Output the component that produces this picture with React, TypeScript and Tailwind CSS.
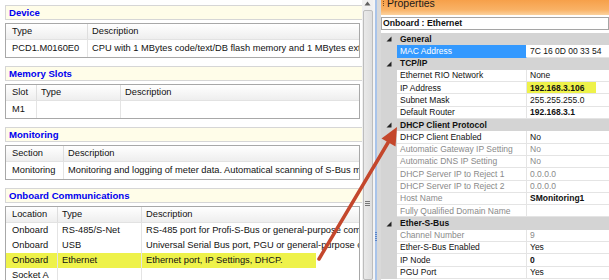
import React from "react";

type Col = { w?: string; label: string };

function Section({
  title,
  cols,
  rows,
  highlightRow,
  rowH,
}: {
  title: string;
  cols: Col[];
  rows: string[][];
  highlightRow?: number;
  rowH: string;
}) {
  return (
    <div className="flex flex-col">
      <div className="h-[15px] border border-r-0 border-[#d6d6d6] bg-[#fffde9] flex items-center pl-[3px] text-[9.6px] font-bold text-[#0000f0] leading-none">
        {title}
      </div>
      <div className="mt-[3px] w-[355px] border border-[#a8a8a8] flex flex-col text-[9.3px] text-[#111] leading-none">
        <div className="h-[16px] flex bg-[linear-gradient(#ffffff,#eeeeee)] border-b border-[#e2e2e2]">
          {cols.map((c, i) => (
            <div
              key={i}
              className={`${c.w ?? "flex-1"} flex items-center ${i === 0 ? "pl-[6px]" : "pl-[4px] border-l border-[#dedede]"} whitespace-nowrap overflow-hidden`}
            >
              {c.label}
            </div>
          ))}
        </div>
        {rows.map((r, ri) => (
          <div key={ri} className={`${rowH} flex relative`}>
            {highlightRow === ri && (
              <div className="absolute left-0 top-0 bottom-0 w-[310px] bg-[#eef24a]" />
            )}
            {cols.map((c, i) => (
              <div
                key={i}
                className={`${c.w ?? "flex-1"} relative flex items-center ${i === 0 ? "pl-[6px]" : "pl-[4px] border-l border-[#e4e4e4]"} whitespace-nowrap overflow-hidden`}
              >
                {r[i]}
              </div>
            ))}
          </div>
        ))}
      </div>
    </div>
  );
}

type P =
  | { cat: string }
  | { l: string; v?: string; sel?: boolean; dis?: boolean; bold?: boolean; hl?: boolean; ldis?: boolean };

const props: P[] = [
  { cat: "General" },
  { l: "MAC Address", v: "7C 16 0D 00 33 54", sel: true },
  { cat: "TCP/IP" },
  { l: "Ethernet RIO Network", v: "None" },
  { l: "IP Address", v: "192.168.3.106", bold: true, hl: true },
  { l: "Subnet Mask", v: "255.255.255.0" },
  { l: "Default Router", v: "192.168.3.1", bold: true },
  { cat: "DHCP Client Protocol" },
  { l: "DHCP Client Enabled", v: "No" },
  { l: "Automatic Gateway IP Setting", v: "No", dis: true },
  { l: "Automatic DNS IP Setting", v: "No", dis: true },
  { l: "DHCP Server IP to Reject 1", v: "0.0.0.0", dis: true },
  { l: "DHCP Server IP to Reject 2", v: "0.0.0.0", dis: true },
  { l: "Host Name", v: "SMonitoring1", bold: true, ldis: true },
  { l: "Fully Qualified Domain Name", v: "", dis: true },
  { cat: "Ether-S-Bus" },
  { l: "Channel Number", v: "9", dis: true },
  { l: "Ether-S-Bus Enabled", v: "Yes" },
  { l: "IP Node", v: "0", bold: true },
  { l: "PGU Port", v: "Yes" },
];

function Tri() {
  return (
    <svg width="6" height="6" viewBox="0 0 6 6" className="block">
      <polygon points="5.5,0.5 5.5,5.5 0.5,5.5" fill="#222" />
    </svg>
  );
}

export default function App() {
  return (
    <div className="w-[609px] h-[280px] overflow-hidden flex relative bg-white font-['Liberation_Sans',Arial,sans-serif]">
      {/* Left pane */}
      <div className="w-[362px] shrink-0 flex flex-col gap-2 pl-[5px] pt-[5px] overflow-hidden">
        <Section
          title="Device"
          rowH="h-[17px]"
          cols={[{ w: "w-[81px] shrink-0", label: "Type" }, { label: "Description" }]}
          rows={[["PCD1.M0160E0", "CPU with 1 MBytes code/text/DB flash memory and 1 MBytes extension"]]}
        />
        <Section
          title="Memory Slots"
          rowH="h-[17px]"
          cols={[
            { w: "w-[30px] shrink-0", label: "Slot" },
            { w: "w-[84px] shrink-0", label: "Type" },
            { label: "Description" },
          ]}
          rows={[["M1", "", ""]]}
        />
        <Section
          title="Monitoring"
          rowH="h-[17px]"
          cols={[{ w: "w-[57px] shrink-0", label: "Section" }, { label: "Description" }]}
          rows={[["Monitoring", "Monitoring and logging of meter data. Automatical scanning of S-Bus meters"]]}
        />
        <Section
          title="Onboard Communications"
          rowH="h-[15px]"
          highlightRow={2}
          cols={[
            { w: "w-[51px] shrink-0", label: "Location" },
            { w: "w-[84px] shrink-0", label: "Type" },
            { label: "Description" },
          ]}
          rows={[
            ["Onboard", "RS-485/S-Net", "RS-485 port for Profi-S-Bus or general-purpose communication"],
            ["Onboard", "USB", "Universal Serial Bus port, PGU or general-purpose communication"],
            ["Onboard", "Ethernet", "Ethernet port, IP Settings, DHCP."],
            ["Socket A", "", ""],
            ["", "", ""],
          ]}
        />
      </div>

      {/* Scrollbar */}
      <div className="w-[11px] shrink-0 bg-[#f0f0f0] flex flex-col items-center">
        <svg width="7" height="5" viewBox="0 0 7 5" className="mt-[1px]">
          <polygon points="3.5,0.5 6.5,4.5 0.5,4.5" fill="#606060" />
        </svg>
        <div className="mt-[4px] w-[10px] flex-1 border border-[#bdbdbd] rounded-[2px] bg-[linear-gradient(90deg,#e9e9e9,#dedede)] flex flex-col items-center pt-[190px] gap-[1px]">
          <div className="w-[5px] h-px bg-[#777]" />
          <div className="w-[5px] h-px bg-[#777]" />
          <div className="w-[5px] h-px bg-[#777]" />
        </div>
      </div>

      {/* Splitter */}
      <div className="w-[8px] shrink-0 flex">
        <div className="w-[2px] bg-[#f4f4f4]" />
        <div className="w-[2px] bg-[#a9c4ea] flex flex-col items-center pt-[232px] gap-[1px]">
          <div className="w-[2px] h-px bg-[#5a84c8]" />
          <div className="w-[2px] h-px bg-[#5a84c8]" />
          <div className="w-[2px] h-px bg-[#5a84c8]" />
          <div className="w-[2px] h-px bg-[#5a84c8]" />
          <div className="w-[2px] h-px bg-[#5a84c8]" />
        </div>
        <div className="flex-1 bg-[#d9d9d9]" />
      </div>

      {/* Right pane */}
      <div className="flex-1 flex flex-col overflow-hidden">
        <div className="h-[15px] shrink-0 bg-[linear-gradient(#f6a04a,#f9b266_65%,#fcd29e)] flex items-start pl-[2px]">
          <div className="flex flex-col gap-[1px] mt-[1px] mr-[3px]">
            <div className="w-px h-px bg-[#7a4a20]" />
            <div className="w-px h-px bg-[#7a4a20]" />
            <div className="w-px h-px bg-[#7a4a20]" />
          </div>
          <span className="text-[10.5px] leading-[10px] -mt-[2px] text-[#1a1a1a]">Properties</span>
        </div>
        <div className="mt-[2px] h-[13px] shrink-0 border border-[#a5a5a5] flex items-center pl-[1px] text-[8.7px] font-bold text-[#111] leading-none">
          Onboard : Ethernet
        </div>
        <div className="mt-[3px] flex flex-col text-[8.5px] leading-none">
          {props.map((p, i) =>
            "cat" in p ? (
              <div key={i} className="h-[12.3px] shrink-0 flex bg-[#d4d4d4]">
                <div className="w-[16px] flex items-center justify-center">
                  <Tri />
                </div>
                <div className="flex items-center pl-[3px] font-bold text-[#111]">{p.cat}</div>
              </div>
            ) : (
              <div key={i} className="h-[12.3px] shrink-0 flex">
                <div className="w-[16px] bg-[#d4d4d4]" />
                <div
                  className={`w-[130px] shrink-0 flex items-center pl-[3px] border-b border-r ${
                    p.sel ? "bg-[#3399ff] text-white border-b-[#3399ff]" : "border-[#e4e4e4]"
                  } ${p.dis || p.ldis ? "text-[#8a8a8a]" : p.sel ? "" : "text-[#111]"} whitespace-nowrap overflow-hidden`}
                >
                  {p.l}
                </div>
                <div
                  className={`flex-1 flex items-center border-b border-[#e4e4e4] whitespace-nowrap ${
                    p.dis ? "text-[#8a8a8a]" : "text-[#111]"
                  } ${p.bold ? "font-bold" : ""}`}
                >
                  {p.hl ? (
                    <span className="h-full w-[69px] bg-[#eef24a] flex items-center pl-[3px]">{p.v}</span>
                  ) : (
                    <span className="pl-[3px]">{p.v}</span>
                  )}
                </div>
              </div>
            )
          )}
        </div>
      </div>

      {/* Annotation arrow */}
      <svg className="absolute inset-0 pointer-events-none" width="609" height="280" viewBox="0 0 609 280">
        <line x1="319" y1="259" x2="389" y2="141" stroke="#c4472c" strokeWidth="3.5" strokeLinecap="round" />
        <polygon points="397,127 381.5,138.5 395.5,146.5" fill="#c4472c" />
      </svg>
    </div>
  );
}
